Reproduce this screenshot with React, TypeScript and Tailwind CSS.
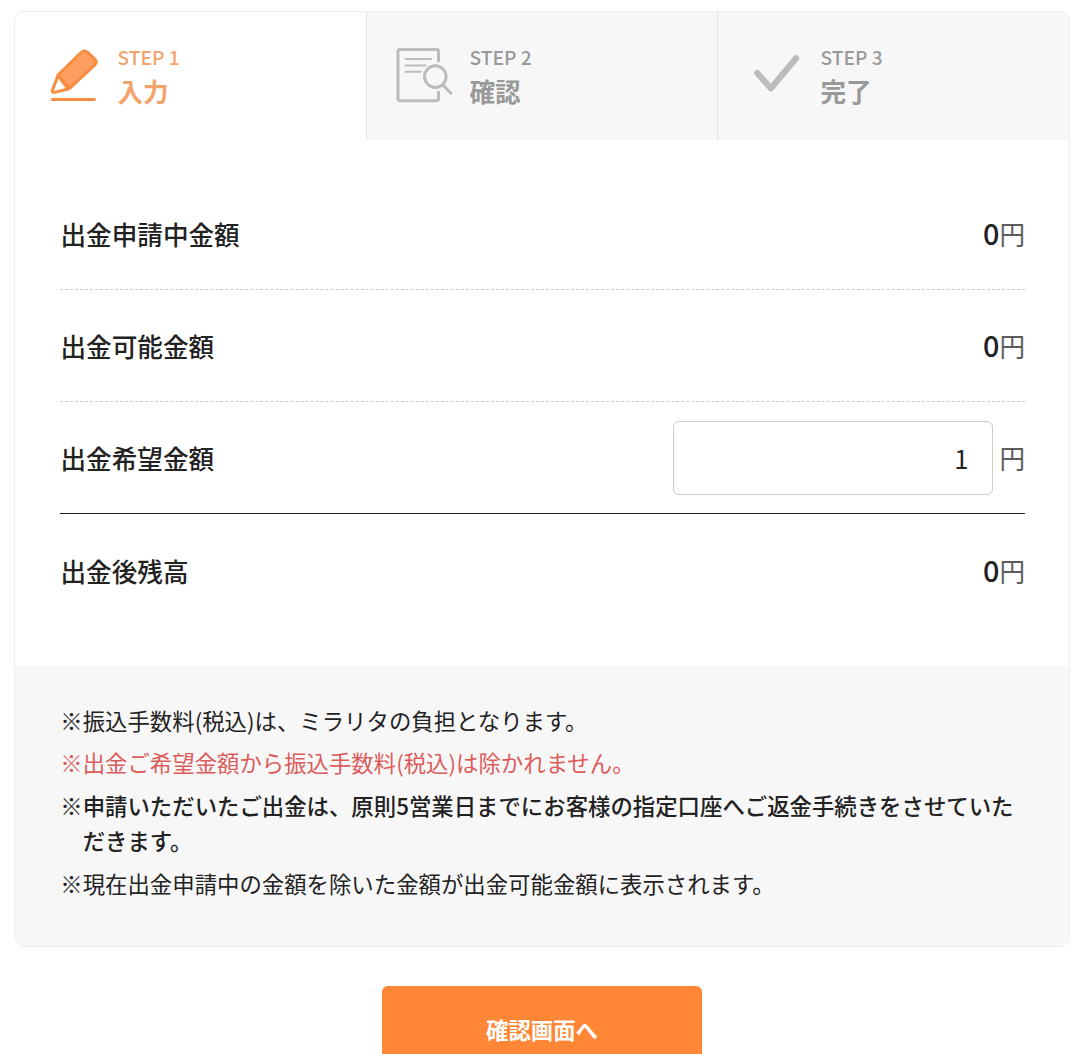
import React, {useState} from "react";

type TStep = {
    step: string;
    name: string;
    icon: React.ReactNode;
};

type TNote = {
    text: string;
    className: string;
};

function PencilIcon() {
    return (
        <svg className="ml-1" width="50" height="56" viewBox="0 0 50 56" fill="none" strokeLinecap="round" strokeLinejoin="round">
            <path d="M8 27 L31 4.6 Q34.5 1.4 38 4.6 L44.8 11 Q47.6 14 44.8 17 L19.5 40.4 Z" fill="#fe9f60" stroke="#f88c40" strokeWidth="3"/>
            <path d="M8 27.5 L2.4 42.5 Q2.2 44.8 4.3 44.4 L18.2 41 Z" fill="#fff" stroke="#f88c40" strokeWidth="3"/>
            <path d="M2.3 51.6 H44.3" stroke="#f88c40" strokeWidth="3"/>
        </svg>
    );
}

function DocumentSearchIcon() {
    return (
        <svg width="58" height="56" viewBox="0 0 58 56" fill="none" stroke="#bcbcbc" strokeLinecap="round" strokeLinejoin="round">
            <path d="M42.5 14 V3.4 Q42.5 1.4 40.3 1.4 H4.2 Q2 1.4 2 3.4 V50.6 Q2 52.8 4.2 52.8 H40.3 Q42.5 52.8 42.5 50.6 V43" strokeWidth="3" strokeLinecap="butt"/>
            <path d="M9.5 11 H35 M9.5 17.4 H29.5 M9.5 23.8 H25" strokeWidth="2"/>
            <circle cx="39.3" cy="28.6" r="10.8" strokeWidth="3"/>
            <path d="M47 37 L54.8 45.3" strokeWidth="3"/>
        </svg>
    );
}

function CheckIcon() {
    return (
        <svg className="-mt-1 ml-0.5" width="46" height="38" viewBox="0 0 46 38" fill="none">
            <path d="M3.2 18 L17 33.3 L42 3.3" stroke="#bcbcbc" strokeWidth="6.2" strokeLinecap="round" strokeLinejoin="round"/>
        </svg>
    );
}

const steps: TStep[] = [
    {step: "STEP 1", name: "入力", icon: <PencilIcon/>},
    {step: "STEP 2", name: "確認", icon: <DocumentSearchIcon/>},
    {step: "STEP 3", name: "完了", icon: <CheckIcon/>},
];

const notes: TNote[] = [
    {text: "振込手数料(税込)は、ミラリタの負担となります。", className: ""},
    {text: "出金ご希望金額から振込手数料(税込)は除かれません。", className: "text-[#dc5c5c]"},
    {text: "申請いただいたご出金は、原則5営業日までにお客様の指定口座へご返金手続きをさせていただきます。", className: "font-medium"},
    {text: "現在出金申請中の金額を除いた金額が出金可能金額に表示されます。", className: ""},
];

function AmountRow({label, border, children}: {label: string, border: string, children: React.ReactNode}) {
    return (
        <div className={`flex h-28 items-center justify-between ${border}`}>
            <span className="pt-px pl-[0.5px] font-medium">{label}</span>
            {children}
        </div>
    );
}

function Amount({value}: {value: number}) {
    return (
        <div className="flex items-baseline">
            <span className="text-[28.8px] leading-10 font-medium">{value}</span>
            <span className="text-[#5c5c5c]">円</span>
        </div>
    );
}

function App() {
    const [amount, setAmount] = useState<string>("1");

    // The first step is the one being filled in
    const current = 0;

    return (
        <div lang="ja" className="h-[1054px] overflow-hidden bg-white pt-[11px] pl-3.5 font-['Noto_Sans_CJK_JP',sans-serif] text-[#222]">
            <div className="w-[1056px] overflow-hidden rounded-[10px] border border-[#eee]">
                <div className="grid h-32 grid-cols-[351px_351px_1fr]">
                    {steps.map((item, index) => (
                        <div
                            key={item.step}
                            className={`flex pl-[29px] ${index === current
                                ? "text-[#f3a26c]"
                                : "border-l border-[#e4e4e4] bg-[#f7f7f7] text-[#999]"}`}
                        >
                            <div className="flex h-32 w-[58px] items-center justify-center">{item.icon}</div>
                            <div className="pt-8 pl-[15.5px]">
                                <div className="text-[19.2px] leading-[27px] font-medium">{item.step}</div>
                                <div className="text-[25.6px] leading-10 font-bold">{item.name}</div>
                            </div>
                        </div>
                    ))}
                </div>

                <div className="h-[526px] pt-[38px] pr-11 pl-[45px] text-[25.6px] leading-10">
                    <AmountRow label="出金申請中金額" border="border-b border-dashed border-[#ccc]">
                        <Amount value={0}/>
                    </AmountRow>
                    <AmountRow label="出金可能金額" border="border-b border-dashed border-[#ccc]">
                        <Amount value={0}/>
                    </AmountRow>
                    <AmountRow label="出金希望金額" border="border-b border-[#222]">
                        <div className="flex items-center gap-1.5">
                            <input
                                type="text"
                                value={amount}
                                onChange={(event) => setAmount(event.target.value)}
                                className="h-[74px] w-80 rounded-md border border-[#ccc] bg-white px-6 pb-px text-right"
                            />
                            <span className="pt-px text-[#5c5c5c]">円</span>
                        </div>
                    </AmountRow>
                    <AmountRow label="出金後残高" border="">
                        <Amount value={0}/>
                    </AmountRow>
                </div>

                <ul className="flex h-[280px] flex-col gap-[6.8px] bg-[#f7f7f7] pt-[37px] pr-11 pl-[45.3px] text-[22.4px] leading-[35.6px]">
                    {notes.map((note) => (
                        <li key={note.text} className={`flex ${note.className}`}>
                            <span className="font-normal">※</span>
                            <span>{note.text}</span>
                        </li>
                    ))}
                </ul>
            </div>

            <button className="mt-[39px] ml-[368px] block h-[90px] w-80 rounded-md bg-[#ff8635] pb-0.5 text-[22.4px] font-bold text-white">
                確認画面へ
            </button>
        </div>
    );
}

export default App;
